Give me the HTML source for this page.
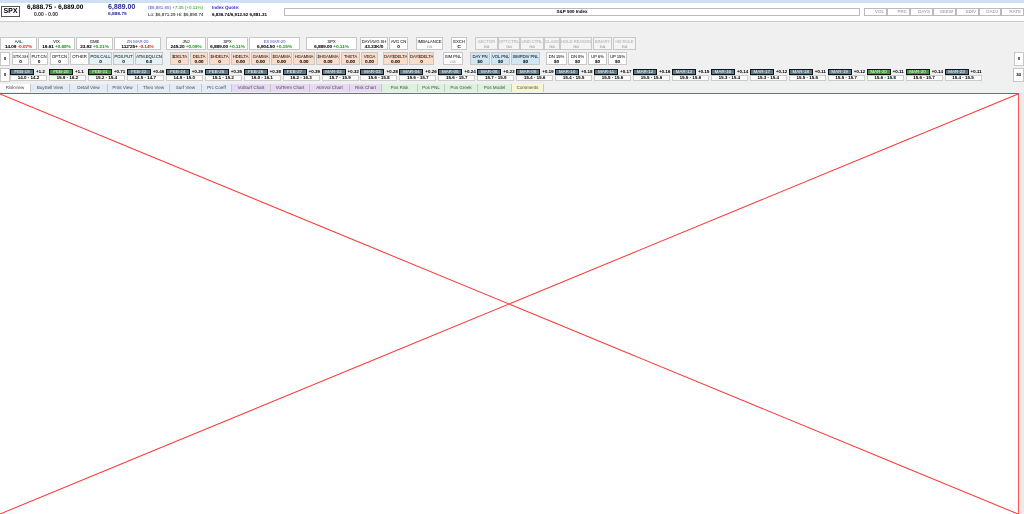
<!DOCTYPE html>
<html><head><meta charset="utf-8"><style>
*{box-sizing:border-box;margin:0;padding:0}
body{width:1024px;height:514px;overflow:hidden;background:#f0f0f0;font-family:"Liberation Sans",sans-serif;font-size:5px;color:#000;position:relative}
.a{position:absolute}
.t{position:absolute;background:#fff;border:1px solid #c8c8c8;text-align:center;line-height:5.5px;padding-top:1px;white-space:nowrap;overflow:hidden;font-size:4.3px;letter-spacing:-0.1px}
.t b{display:block;font-weight:bold;font-size:4.8px}
.g{color:#1a9a1a}.r{color:#e02020}
.pe{background:#fbdcc8}.bl{background:#cfe6f5}.cy{background:#e4f1f5}.gr{color:#aaa;background:#f4f4f4}
.chips{position:absolute;left:10px;top:68px;display:flex}
.c{width:38.95px;position:relative;height:14px;white-space:nowrap}
.c i{font-style:normal;position:absolute;left:0;top:1px;width:24px;height:6px;background:#5a7a8a;color:#fff;border:1px solid #111;font-size:4.5px;line-height:4px;text-align:center}
.c i.gn{background:#3a9a3a}
.c s{text-decoration:none;position:absolute;left:26px;top:1px;font-weight:bold;font-size:4.5px}
.c u{text-decoration:none;position:absolute;left:0;top:7px;width:37px;height:6px;background:#fff;border:1px solid #ccc;text-align:center;font-weight:bold;font-size:4.5px;line-height:4.5px}
.tabs{position:absolute;top:84px;left:0;height:8px;display:flex}
.tabs div{height:8px;border-right:1px solid #c8c8c8;text-align:center;line-height:8px;font-size:4.5px;color:#444;background:#e3ecf6;white-space:nowrap}
.btn{position:absolute;top:8px;height:8px;border:1px solid #bbb;background:#fff;font-size:4.5px;color:#888;text-align:right;padding-right:2px;line-height:6px}
</style></head><body>
<div class="a" style="left:0;top:0;width:1024px;height:3px;background:#cfe0f2"></div>
<div class="a" style="left:0;top:3px;width:1024px;height:18px;background:#fff"></div>
<div class="a" style="left:1px;top:6px;width:19px;height:11px;border:1px solid #555;font-weight:bold;font-size:7px;line-height:9px;text-align:center;background:#fff">SPX</div>
<div class="a" style="left:27px;top:4px;font-size:6.5px;font-weight:bold">6,888.75 - 6,889.00</div>
<div class="a" style="left:34px;top:12px;font-weight:bold;color:#333">0.00 - 0.00</div>
<div class="a" style="left:108px;top:4px;font-size:7px;font-weight:bold;color:#2a2a9a">6,889.00</div>
<div class="a" style="left:108px;top:12px;font-weight:bold;color:#2a2a9a;font-size:4.8px">6,888.75</div>
<div class="a" style="left:148px;top:5px;font-size:4.5px;color:#4a4ad0">($6,881.65) <span class="g">+7.35 (+0.11%)</span></div>
<div class="a" style="left:148px;top:12px;font-size:4.5px">Lo: $6,871.29 Hi: $6,890.74</div>
<div class="a" style="left:212px;top:5px;font-size:4.5px;color:#2a2ad0;font-weight:bold">Index Quote:</div>
<div class="a" style="left:212px;top:12px;font-size:4.5px;font-weight:bold">6,836.74/6,912.52 6,881.31</div>
<div class="a" style="left:284px;top:8px;width:576px;height:8px;border:1px solid #bbb;font-size:4.5px;font-weight:bold;text-align:center;line-height:6px">S&amp;P 500 Index</div>
<div class="btn" style="left:864px;width:23px">VOL</div><div class="btn" style="left:887px;width:23px">PRC</div><div class="btn" style="left:910px;width:23px">DAYS</div><div class="btn" style="left:933px;width:23px">SKEW</div><div class="btn" style="left:956px;width:23px">SDIV</div><div class="btn" style="left:979px;width:22px">DADJ</div><div class="btn" style="left:1001px;width:23px">RATE</div>
<div class="a" style="left:0;top:21px;width:1024px;height:1px;background:#ccc"></div>

<div class="t" style="left:0;top:37px;width:37px;height:13px">AAL<b>14.09 <span class="r">-0.07%</span></b></div>
<div class="t" style="left:38px;top:37px;width:37px;height:13px">VIX<b>19.61 <span class="g">+0.68%</span></b></div>
<div class="t" style="left:76px;top:37px;width:37px;height:13px">GME<b>23.92 <span class="g">+0.21%</span></b></div>
<div class="t" style="left:114px;top:37px;width:47px;height:13px"><span style="color:#5050c0">ZN MAR-20</span><b>112'25+ <span class="r">-0.14%</span></b></div>
<div class="t" style="left:166px;top:37px;width:40px;height:13px">JNJ<b>245.20 <span class="g">+0.09%</span></b></div>
<div class="t" style="left:207px;top:37px;width:41px;height:13px">SPX<b>6,889.00 <span class="g">+0.11%</span></b></div>
<div class="t" style="left:249px;top:37px;width:51px;height:13px"><span style="color:#5050c0">ES MAR-20</span><b>6,904.50 <span class="g">+0.15%</span></b></div>
<div class="t" style="left:306px;top:37px;width:51px;height:13px">SPX<b>6,889.00 <span class="g">+0.11%</span></b></div>
<div class="t" style="left:360px;top:37px;width:28px;height:13px">DAY/AVG SH<b>43.33K/0</b></div>
<div class="t" style="left:389px;top:37px;width:19px;height:13px">AVG CN<b>0</b></div>
<div class="t" style="left:416px;top:37px;width:27px;height:13px">IMBALANCE<b style="color:#999;font-weight:normal">na</b></div>
<div class="t" style="left:451px;top:37px;width:16px;height:13px">EXCH<b>C</b></div>
<div class="t gr" style="left:475px;top:37px;width:23px;height:13px">SECTOR<b>na</b></div>
<div class="t gr" style="left:498px;top:37px;width:22px;height:13px">OPT.CTRL<b>na</b></div>
<div class="t gr" style="left:520px;top:37px;width:24px;height:13px">UND.CTRL<b>na</b></div>
<div class="t gr" style="left:544px;top:37px;width:16px;height:13px">CLASS<b>na</b></div>
<div class="t gr" style="left:560px;top:37px;width:32px;height:13px">HOLD REASON<b>na</b></div>
<div class="t gr" style="left:593px;top:37px;width:19px;height:13px">BINARY<b>na</b></div>
<div class="t gr" style="left:613px;top:37px;width:23px;height:13px">HD RULE<b>na</b></div>

<div class="t" style="left:0;top:52px;width:10px;height:14px;font-weight:bold;line-height:12px;padding:0">0</div>
<div class="t" style="left:12px;top:52px;width:17px;height:13px">STK.SH<b>0</b></div>
<div class="t" style="left:30px;top:52px;width:18px;height:13px">PUT.CN<b>0</b></div>
<div class="t" style="left:50px;top:52px;width:19px;height:13px">OPT.CN<b>0</b></div>
<div class="t" style="left:70px;top:52px;width:19px;height:13px">OTHER<b>&nbsp;</b></div>
<div class="t cy" style="left:89px;top:52px;width:23px;height:13px">POS.CALL<b>0</b></div>
<div class="t cy" style="left:113px;top:52px;width:21px;height:13px">POS.PUT<b>0</b></div>
<div class="t cy" style="left:135px;top:52px;width:28px;height:13px">ATM.EQU.CN<b>0.0</b></div>
<div class="t pe" style="left:170px;top:52px;width:19px;height:13px">$DELTA<b>0</b></div>
<div class="t pe" style="left:190px;top:52px;width:18px;height:13px">DELTA<b>0.00</b></div>
<div class="t pe" style="left:209px;top:52px;width:21px;height:13px">$HDELTA<b>0</b></div>
<div class="t pe" style="left:231px;top:52px;width:19px;height:13px">HDELTA<b>0.00</b></div>
<div class="t pe" style="left:251px;top:52px;width:19px;height:13px">GAMMA<b>0.00</b></div>
<div class="t pe" style="left:271px;top:52px;width:21px;height:13px">$GAMMA<b>0.00</b></div>
<div class="t pe" style="left:293px;top:52px;width:22px;height:13px">HGAMMA<b>0.00</b></div>
<div class="t pe" style="left:316px;top:52px;width:24px;height:13px">$HGAMMA<b>0.00</b></div>
<div class="t pe" style="left:341px;top:52px;width:19px;height:13px">THETA<b>0.00</b></div>
<div class="t pe" style="left:361px;top:52px;width:17px;height:13px">VEGA<b>0.00</b></div>
<div class="t pe" style="left:383px;top:52px;width:25px;height:13px">DAY$DELTA<b>0.00</b></div>
<div class="t pe" style="left:409px;top:52px;width:25px;height:13px">DAY$DELTA<b>0</b></div>
<div class="t" style="left:443px;top:52px;width:20px;height:13px">SIM PNL<b style="color:#999;font-weight:normal">na</b></div>
<div class="t bl" style="left:470px;top:52px;width:20px;height:13px">DAY PN<b>$0</b></div>
<div class="t bl" style="left:491px;top:52px;width:19px;height:13px">VOL PNL<b>$0</b></div>
<div class="t bl" style="left:511px;top:52px;width:29px;height:13px">SIMPDIV PNL<b>$0</b></div>
<div class="t" style="left:546px;top:52px;width:21px;height:13px">DN 15%<b>$0</b></div>
<div class="t" style="left:568px;top:52px;width:19px;height:13px">DN 8%<b>$0</b></div>
<div class="t" style="left:588px;top:52px;width:19px;height:13px">UP 6%<b>$0</b></div>
<div class="t" style="left:608px;top:52px;width:19px;height:13px">UP 15%<b>$0</b></div>
<div class="t" style="left:1014px;top:52px;width:10px;height:14px;font-weight:bold;line-height:12px;padding:0">0</div>

<div class="t" style="left:0;top:68px;width:10px;height:14px;font-weight:bold;line-height:12px;padding:0">0</div>
<div class="chips">
<div class="c"><i>FEB-19</i><s>+1.2</s><u>14.0 - 14.2</u></div>
<div class="c"><i class="gn">FEB-20</i><s>+1.1</s><u>15.9 - 16.2</u></div>
<div class="c"><i class="gn">FEB-21</i><s>+0.71</s><u>15.2 - 15.4</u></div>
<div class="c"><i>FEB-22</i><s>+0.46</s><u>14.5 - 14.7</u></div>
<div class="c"><i>FEB-24</i><s>+0.39</s><u>14.9 - 15.0</u></div>
<div class="c"><i>FEB-25</i><s>+0.35</s><u>15.1 - 15.2</u></div>
<div class="c"><i>FEB-26</i><s>+0.38</s><u>16.0 - 16.1</u></div>
<div class="c"><i>FEB-27</i><s>+0.39</s><u>16.2 - 16.3</u></div>
<div class="c"><i>MAR-02</i><s>+0.32</s><u>15.7 - 15.9</u></div>
<div class="c"><i>MAR-03</i><s>+0.28</s><u>15.6 - 15.8</u></div>
<div class="c"><i>MAR-04</i><s>+0.26</s><u>15.6 - 15.7</u></div>
<div class="c"><i>MAR-05</i><s>+0.24</s><u>15.6 - 15.7</u></div>
<div class="c"><i>MAR-06</i><s>+0.23</s><u>15.7 - 15.9</u></div>
<div class="c"><i>MAR-09</i><s>+0.19</s><u>15.4 - 15.6</u></div>
<div class="c"><i>MAR-10</i><s>+0.18</s><u>15.4 - 15.5</u></div>
<div class="c"><i>MAR-11</i><s>+0.17</s><u>15.5 - 15.6</u></div>
<div class="c"><i>MAR-12</i><s>+0.16</s><u>15.5 - 15.6</u></div>
<div class="c"><i>MAR-13</i><s>+0.15</s><u>15.5 - 15.6</u></div>
<div class="c"><i>MAR-16</i><s>+0.14</s><u>15.3 - 15.4</u></div>
<div class="c"><i>MAR-17</i><s>+0.12</s><u>15.3 - 15.4</u></div>
<div class="c"><i>MAR-18</i><s>+0.11</s><u>15.5 - 15.6</u></div>
<div class="c"><i>MAR-19</i><s>+0.12</s><u>15.5 - 15.7</u></div>
<div class="c"><i class="gn">MAR-20</i><s>+0.11</s><u>15.6 - 15.8</u></div>
<div class="c"><i class="gn">MAR-20</i><s>+0.14</s><u>15.6 - 15.7</u></div>
<div class="c"><i>MAR-23</i><s>+0.11</s><u>15.4 - 15.5</u></div>
</div>
<div class="t" style="left:1013px;top:68px;width:11px;height:14px;font-weight:bold;line-height:12px;padding:0">34</div>

<div class="tabs">
<div style="width:31px;background:#fff">RiskView</div>
<div style="width:39px">BuySell View</div>
<div style="width:38px">Detail View</div>
<div style="width:30px">Print View</div>
<div style="width:32px">Theo View</div>
<div style="width:32px">Surf View</div>
<div style="width:30px">Prc Coeff</div>
<div style="width:39px;background:#e8d8f2">VolSurf Chart</div>
<div style="width:39px;background:#e8d8f2">VolTerm Chart</div>
<div style="width:40px;background:#e8d8f2">AtmVol Chart</div>
<div style="width:32px;background:#e8d8f2">Risk Chart</div>
<div style="width:36px;background:#dcf2dc">Pos Risk</div>
<div style="width:27px;background:#dcf2dc">Pos PNL</div>
<div style="width:33px;background:#dcf2dc">Pos Greek</div>
<div style="width:34px;background:#dcf2dc">Pos Model</div>
<div style="width:32px;background:#fbf6d2">Comments</div>
</div>

<div class="a" style="left:0;top:93px;width:1019px;height:421px;background:#fff;border-top:1px solid #f33;border-right:1px solid #f55"></div>
<div class="a" style="left:1019px;top:93px;width:5px;height:421px;background:#eaeaea"></div>
<svg class="a" style="left:0;top:0" width="1024" height="514"><line x1="0" y1="94" x2="1018" y2="514" stroke="#f33" stroke-width="1"/><line x1="1018" y1="94" x2="0" y2="514" stroke="#f33" stroke-width="1"/></svg>
</body></html>
